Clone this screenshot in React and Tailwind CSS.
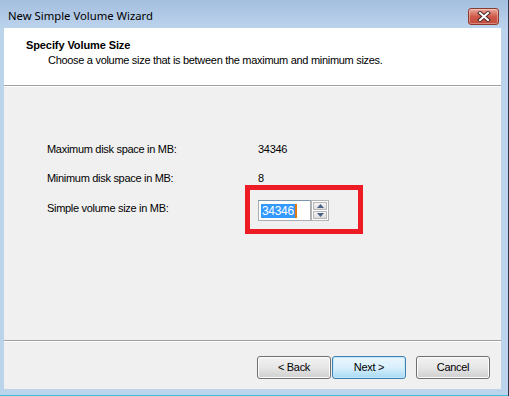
import React from 'react'

const ui = { fontFamily: '"Liberation Sans", Arial, sans-serif', letterSpacing: '-0.3px' }

function CloseButton() {
    return (
        <button className="w-[31px] h-[17px] rounded-[3px] border border-[#8b3a2e] bg-gradient-to-b from-[#e9a99c] via-[#cf5a4a] to-[#c24a3a] flex items-center justify-center shadow-[inset_0_0_0_1px_rgba(255,255,255,0.35)]">
            <svg width="14" height="11" viewBox="0 0 14 11">
                <path d="M3 2 L11 9 M11 2 L3 9" stroke="#4a2a2a" strokeWidth="4" strokeLinecap="square" />
                <path d="M3 2 L11 9 M11 2 L3 9" stroke="#ffffff" strokeWidth="2" strokeLinecap="square" />
            </svg>
        </button>
    )
}

function WinButton({ children, primary }) {
    return (
        <button
            className={
                'w-[74px] h-[23px] rounded-[3px] border text-[11px] text-black flex items-center justify-center ' +
                (primary
                    ? 'border-[#3c7fb1] bg-gradient-to-b from-[#eaf6fd] via-[#d9f0fc] to-[#a7d9f5] shadow-[inset_0_0_0_1px_#c6e6fa]'
                    : 'border-[#707070] bg-gradient-to-b from-[#f2f2f2] via-[#e6e6e6] to-[#cfcfcf] shadow-[inset_0_0_0_1px_#fcfcfc]')
            }
            style={ui}
        >
            {children}
        </button>
    )
}

function SpinBox() {
    return (
        <div className="relative">
            {/* annotation box */}
            <div className="absolute left-[-13px] top-[-15px] w-[118px] h-[49px] border-[5px] border-[#ed1c24]" />
            <div className="flex h-[21px]">
                <div className="w-[53px] h-[21px] bg-white border border-[#abadb3] border-t-[#7a96b0] flex items-center pl-[2px]">
                    <span className="bg-[#3399ff] text-white text-[12px] leading-[14px] px-[1px]" style={ui}>34346</span>
                    <span className="w-[2px] h-[14px] bg-[#e07a10]" />
                </div>
                <div className="w-[18px] h-[21px] border border-[#b3b3b3] bg-white flex flex-col p-[1px] gap-[1px]">
                    <div className="flex-1 border border-[#b8b8b8] bg-gradient-to-b from-[#f4f4f4] to-[#dcdcdc] flex items-center justify-center">
                        <svg width="7" height="4" viewBox="0 0 7 4"><path d="M3.5 0 L7 4 L0 4 Z" fill="#4d6185" /></svg>
                    </div>
                    <div className="flex-1 border border-[#b8b8b8] bg-gradient-to-b from-[#f4f4f4] to-[#dcdcdc] flex items-center justify-center">
                        <svg width="7" height="4" viewBox="0 0 7 4"><path d="M0 0 L7 0 L3.5 4 Z" fill="#4d6185" /></svg>
                    </div>
                </div>
            </div>
        </div>
    )
}

export default function App() {
    return (
        <div className="w-[509px] h-[396px] flex flex-col bg-[#bcd3ec] border-r border-[#2a3a4a] overflow-hidden">
            {/* Title bar */}
            <div className="h-[28px] flex items-start justify-between bg-gradient-to-b from-[#a3bedf] to-[#bcd3ec] pl-[8px] pr-[8px]">
                <span className="text-[11.3px] leading-[12px] mt-[10px] text-black" style={{ fontFamily: '"Noto Sans", "Open Sans", sans-serif' }}>
                    New Simple Volume Wizard
                </span>
                <div className="mt-[8px] mr-[1px]">
                    <CloseButton />
                </div>
            </div>

            {/* Client area */}
            <div className="ml-[4px] w-[497px] h-[361px] flex flex-col bg-[#f0f0f0]" style={ui}>
                {/* Header */}
                <div className="h-[58px] bg-white pl-[22px] pt-[11px] border-b border-[#a0a0a0]">
                    <div className="text-[11px] font-bold leading-[13px] text-black tracking-[-0.1px]">Specify Volume Size</div>
                    <div className="text-[11px] leading-[13px] text-black pl-[22px] mt-[2px]">
                        Choose a volume size that is between the maximum and minimum sizes.
                    </div>
                </div>
                <div className="h-px bg-white" />

                {/* Body */}
                <div className="h-[253px] pl-[43px] pt-[56px] text-[11px] leading-[13px] text-black">
                    <div className="grid grid-cols-[211px_1fr] gap-y-[16px]">
                        <span>Maximum disk space in MB:</span>
                        <span>34346</span>
                        <span>Minimum disk space in MB:</span>
                        <span>8</span>
                        <span className="mt-[1px]">Simple volume size in MB:</span>
                        <div className="-mt-[1px]">
                            <SpinBox />
                        </div>
                    </div>
                </div>

                {/* Footer */}
                <div className="border-t border-[#a0a0a0] flex-1">
                    <div className="h-px bg-white" />
                    <div className="flex pl-[253px] pt-[14px]">
                        <WinButton>&lt; Back</WinButton>
                        <div className="ml-[1px]">
                            <WinButton primary>Next &gt;</WinButton>
                        </div>
                        <div className="ml-[10px]">
                            <WinButton>Cancel</WinButton>
                        </div>
                    </div>
                </div>
            </div>

            <div className="flex-1" />
            <div className="h-px bg-[#39c1e0]" />
        </div>
    )
}
